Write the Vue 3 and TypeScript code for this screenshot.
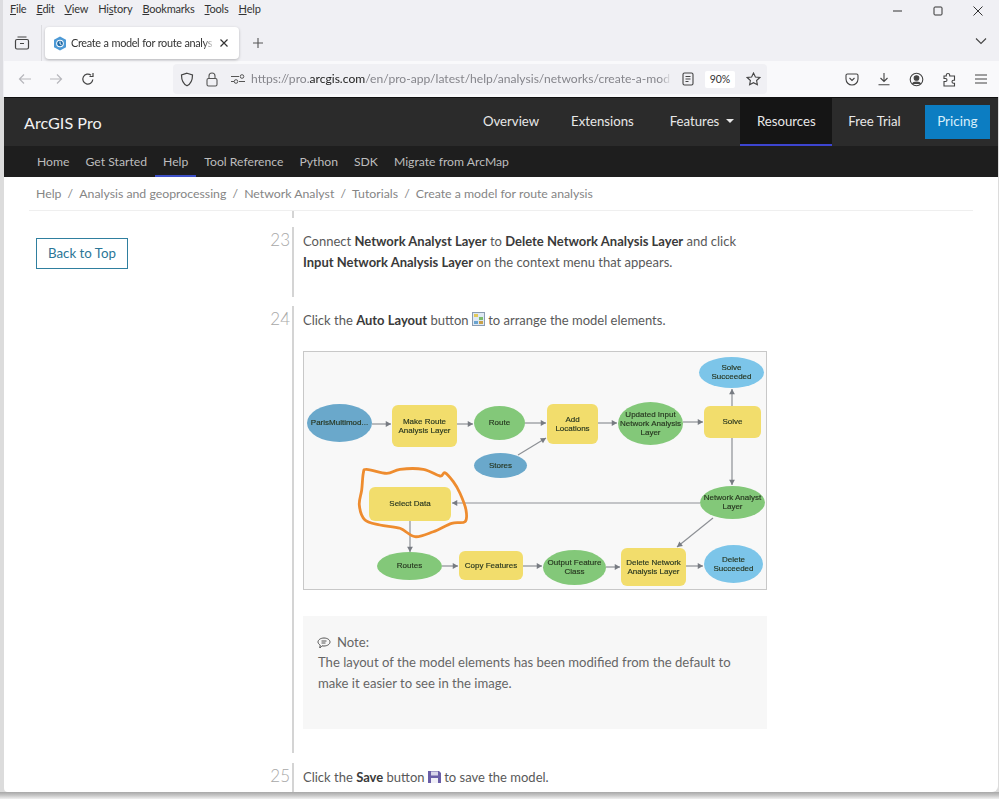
<script setup lang="ts">
const menus = [
  { u: 'F', r: 'ile' }, { u: 'E', r: 'dit' }, { u: 'V', r: 'iew' },
  { b: 'Hi', u: 's', r: 'tory' }, { u: 'B', r: 'ookmarks' }, { u: 'T', r: 'ools' }, { u: 'H', r: 'elp' },
]
const mainNav = ['Overview', 'Extensions']
const subNav = ['Home', 'Get Started', 'Help', 'Tool Reference', 'Python', 'SDK', 'Migrate from ArcMap']
const crumbs = ['Help', 'Analysis and geoprocessing', 'Network Analyst', 'Tutorials', 'Create a model for route analysis']

type Node = { x: number; y: number; w: number; h: number; kind: string; lines: string[] }
const nodes: Node[] = [
  { x: 2, y: 52, w: 65, h: 38, kind: 'blue', lines: ['ParisMultimod...'] },
  { x: 87, y: 53, w: 65, h: 42, kind: 'yellow', lines: ['Make Route', 'Analysis Layer'] },
  { x: 169, y: 54, w: 51, h: 34, kind: 'green', lines: ['Route'] },
  { x: 242, y: 52, w: 51, h: 40, kind: 'yellow', lines: ['Add', 'Locations'] },
  { x: 313, y: 50, w: 65, h: 43, kind: 'green', lines: ['Updated  Input', 'Network Analysis', 'Layer'] },
  { x: 399, y: 54, w: 57, h: 32, kind: 'yellow', lines: ['Solve'] },
  { x: 394, y: 5, w: 65, h: 31, kind: 'sky', lines: ['Solve', 'Succeeded'] },
  { x: 169, y: 101, w: 53, h: 25, kind: 'blue', lines: ['Stores'] },
  { x: 64, y: 135, w: 82, h: 34, kind: 'yellow', lines: ['Select Data'] },
  { x: 395, y: 134, w: 65, h: 33, kind: 'green', lines: ['Network Analyst', 'Layer'] },
  { x: 72, y: 200, w: 65, h: 28, kind: 'green', lines: ['Routes'] },
  { x: 154, y: 199, w: 64, h: 29, kind: 'yellow', lines: ['Copy Features'] },
  { x: 238, y: 198, w: 63, h: 35, kind: 'green', lines: ['Output Feature', 'Class'] },
  { x: 316, y: 196, w: 65, h: 38, kind: 'yellow', lines: ['Delete Network', 'Analysis Layer'] },
  { x: 399, y: 193, w: 59, h: 38, kind: 'sky', lines: ['Delete', 'Succeeded'] },
]
const edges = [
  [67, 72, 86, 72], [152, 72, 168, 72], [220, 71, 241, 71], [293, 71, 312, 71], [378, 70, 398, 70],
  [427, 54, 427, 37], [427, 86, 427, 133], [395, 151, 147, 151], [105, 169, 105, 200],
  [137, 214, 153, 214], [218, 214, 237, 214], [301, 215, 315, 215], [381, 214, 398, 214],
  [213, 103, 241, 86], [408, 166, 372, 195],
]
function textY(n: Node, i: number) {
  return n.y + n.h / 2 + (i - (n.lines.length - 1) / 2) * 9 + 2
}
function arrow(e: number[]) {
  const [x1, y1, x2, y2] = e
  const a = Math.atan2(y2 - y1, x2 - x1)
  const l = 6
  const p1 = `${x2 - l * Math.cos(a - 0.5)},${y2 - l * Math.sin(a - 0.5)}`
  const p2 = `${x2 - l * Math.cos(a + 0.5)},${y2 - l * Math.sin(a + 0.5)}`
  return `${x2},${y2} ${p1} ${p2}`
}
const scribblePts = [
  [58.3, 121.3], [61.7, 117.3], [81.7, 121.3], [95, 117.3], [118.3, 117.3], [135, 124], [140, 120.7],
  [148.3, 129.7], [155, 141.3], [161, 158], [160, 169.7], [146.7, 171.3], [128.3, 179.7], [110, 184.7],
  [95, 176.3], [75, 173], [60, 168], [54.3, 153], [56.7, 138],
]
function smooth(p: number[][]) {
  const n = p.length
  let d = `M${p[0][0]} ${p[0][1]}`
  for (let i = 0; i < n; i++) {
    const p0 = p[(i - 1 + n) % n], p1 = p[i], p2 = p[(i + 1) % n], p3 = p[(i + 2) % n]
    const c1x = p1[0] + (p2[0] - p0[0]) / 6, c1y = p1[1] + (p2[1] - p0[1]) / 6
    const c2x = p2[0] - (p3[0] - p1[0]) / 6, c2y = p2[1] - (p3[1] - p1[1]) / 6
    d += `C${c1x.toFixed(1)} ${c1y.toFixed(1)} ${c2x.toFixed(1)} ${c2y.toFixed(1)} ${p2[0]} ${p2[1]}`
  }
  return d
}
const scribble = smooth(scribblePts)
</script>

<template>
  <div class="window">
    <div class="chrome">
      <div class="menubar">
        <span v-for="m in menus" :key="m.r" class="menu">{{ m.b }}<u>{{ m.u }}</u>{{ m.r }}</span>
        <div class="winctl">
          <svg width="12" height="12" viewBox="0 0 12 12"><path d="M1 6h9" stroke="#333" fill="none" /></svg>
          <svg width="12" height="12" viewBox="0 0 12 12"><rect x="2" y="2" width="8" height="8" rx="1" stroke="#333" fill="none" /></svg>
          <svg width="12" height="12" viewBox="0 0 12 12"><path d="M1.500 1.500l9 9M10.500 1.500l-9 9" stroke="#333" fill="none" /></svg>
        </div>
      </div>
      <div class="tabbar">
        <svg class="tabgroup" width="16" height="16" viewBox="0 0 16 16" fill="none" stroke="#444" stroke-width="1.200">
          <rect x="1.500" y="4.500" width="13" height="9.500" rx="1.500" /><path d="M3.500 2h9M6 8.500h4" />
        </svg>
        <span class="tabsep"></span>
        <div class="tab">
          <svg width="14" height="15" viewBox="0 0 14 15">
            <path d="M7 .5l6 3.300v7.400l-6 3.300-6-3.300V3.800z" fill="#4d9ad6" />
            <circle cx="7" cy="7.500" r="3.800" fill="#fff" /><circle cx="7" cy="7.500" r="2.800" fill="#1f6aa6" /><path d="M7 5.500v2.300l1.500.9" stroke="#fff" fill="none" />
          </svg>
          <span class="tabtitle">Create a model for route analys</span>
          <svg width="10" height="10" viewBox="0 0 10 10"><path d="M1.500 1.500l7 7M8.500 1.500l-7 7" stroke="#333" stroke-width="1.200" fill="none" /></svg>
        </div>
        <svg class="plus" width="12" height="12" viewBox="0 0 12 12"><path d="M6 1v10M1 6h10" stroke="#555" stroke-width="1.100" fill="none" /></svg>
        <svg class="chev" width="14" height="8" viewBox="0 0 14 8"><path d="M2 1.500l5 5 5-5" stroke="#444" stroke-width="1.100" fill="none" /></svg>
      </div>
      <div class="toolbar">
        <svg width="14" height="12" viewBox="0 0 14 12"><path d="M13 6H1.500M6 1.500L1.500 6 6 10.500" stroke="#b7b7bc" stroke-width="1.200" fill="none" /></svg>
        <svg class="fwd" width="14" height="12" viewBox="0 0 14 12"><path d="M1 6h11.500M8 1.500L12.500 6 8 10.500" stroke="#b7b7bc" stroke-width="1.200" fill="none" /></svg>
        <svg class="reload" width="14" height="14" viewBox="0 0 14 14"><path d="M11.800 7.500A5 5 0 1 1 10 3.200M12 1v3.500H8.500" stroke="#444" stroke-width="1.200" fill="none" /></svg>
        <div class="urlbar">
          <svg width="14" height="15" viewBox="0 0 14 15"><path d="M7 1.200l5.500 1.800c0 5-1.500 8.800-5.500 10.800C3 11.800 1.500 8 1.500 3z" stroke="#444" stroke-width="1.200" fill="none" /></svg>
          <svg class="lock" width="12" height="15" viewBox="0 0 12 15"><rect x="1" y="6.500" width="10" height="7.500" rx="1.500" stroke="#555" stroke-width="1.100" fill="none" /><path d="M3 6.500V4a3 3 0 0 1 6 0v2.500" stroke="#555" stroke-width="1.100" fill="none" /></svg>
          <svg class="perm" width="14" height="10" viewBox="0 0 14 10"><path d="M0 2.500h8M0 7.500h3M8 7.500h6" stroke="#555" fill="none" /><circle cx="11" cy="2.500" r="1.800" stroke="#555" fill="none" /><circle cx="5" cy="7.500" r="1.800" stroke="#555" fill="none" /></svg>
          <span class="url">https://pro.<b>arcgis.com</b>/en/pro-app/latest/help/analysis/networks/create-a-mod</span>
          <svg class="reader" width="12" height="14" viewBox="0 0 12 14"><rect x="1" y="1" width="10" height="12" rx="1.500" stroke="#444" stroke-width="1.100" fill="none" /><path d="M3.500 4.500h5M3.500 7h5M3.500 9.500h3" stroke="#444" fill="none" /></svg>
          <span class="zoom">90%</span>
          <svg class="star" width="15" height="14" viewBox="0 0 15 14"><path d="M7.500 1l1.900 4 4.400.500-3.200 3 .8 4.300-3.900-2.100-3.900 2.100.8-4.300-3.200-3 4.400-.5z" stroke="#444" stroke-width="1.100" fill="none" /></svg>
        </div>
        <div class="tools">
          <svg width="14" height="13" viewBox="0 0 14 13" fill="none" stroke="#444" stroke-width="1.100"><path d="M1 2.500C1 1.600 1.600 1 2.500 1h9c.9 0 1.500.6 1.500 1.500V6A6 6 0 0 1 1 6z" /><path d="M4.500 5L7 7.500 9.500 5" /></svg>
          <svg width="14" height="14" viewBox="0 0 14 14" fill="none" stroke="#444" stroke-width="1.100"><path d="M7 1v8.500M3.500 6L7 9.500 10.500 6M1.500 12.800h11" /></svg>
          <svg width="15" height="15" viewBox="0 0 15 15" fill="none" stroke="#444" stroke-width="1.100"><circle cx="7.500" cy="7.500" r="6.300" /><circle cx="7.500" cy="6" r="2.300" fill="#444" /><path d="M3.500 12c1-2.500 7-2.500 8 0" fill="#444" /></svg>
          <svg width="14" height="15" viewBox="0 0 14 15" fill="none" stroke="#444" stroke-width="1.100"><path d="M6 1.500c1 0 1.700.6 1.700 1.500v1h4.800v4.300h-1c-1 0-1.500.7-1.500 1.500s.5 1.500 1.500 1.500h1V14H2V9.500h1.500C4.500 9.500 5 9 5 8s-.5-1.500-1.500-1.500H2V4h2.300V3c0-.9.700-1.500 1.700-1.500z" /></svg>
          <svg width="14" height="12" viewBox="0 0 14 12"><path d="M1 2h12M1 6h12M1 10h12" stroke="#444" stroke-width="1.100" fill="none" /></svg>
        </div>
      </div>
    </div>

    <div class="page">
      <header class="mainbar">
        <span class="brand">ArcGIS Pro</span>
        <nav class="mainnav">
          <a v-for="n in mainNav" :key="n">{{ n }}</a>
          <a class="feat">Features <i class="caret"></i></a>
          <a class="res">Resources</a>
          <a>Free Trial</a>
          <a class="pricing">Pricing</a>
        </nav>
      </header>
      <nav class="subbar">
        <a v-for="s in subNav" :key="s" :class="{ on: s === 'Help' }">{{ s }}</a>
      </nav>
      <div class="crumbs">
        <template v-for="(c, i) in crumbs" :key="c">
          <span v-if="i" class="slash">/</span><span>{{ c }}</span>
        </template>
      </div>
      <div class="body">
        <aside class="side"><a class="top">Back to Top</a></aside>
        <main class="steps">
          <div class="tick"></div>
          <section class="step s23">
            <span class="num">23</span>
            <div class="content">
              <p>Connect <b>Network Analyst Layer</b> to <b>Delete Network Analysis Layer</b> and click<br /><b>Input Network Analysis Layer</b> on the context menu that appears.</p>
            </div>
          </section>
          <section class="step s24">
            <span class="num">24</span>
            <div class="content">
              <p>Click the <b>Auto Layout</b> button
                <svg class="inl" width="13" height="14" viewBox="0 0 13 14"><rect x=".5" y=".5" width="12" height="13" fill="#dfe9f4" stroke="#8a9bb0" /><rect x="2" y="2" width="4" height="3" fill="#e2c95c" /><rect x="7" y="5" width="4" height="3" fill="#7dbb6a" /><rect x="2" y="9" width="4" height="3" fill="#6aa3d0" /><rect x="7" y="9" width="4" height="3" fill="#c9a24a" /></svg>
                to arrange the model elements.</p>
              <div class="diagram">
                <svg width="461" height="237" viewBox="0 0 461 237">
                  <g v-for="(e, i) in edges" :key="i">
                    <line :x1="e[0]" :y1="e[1]" :x2="e[2]" :y2="e[3]" stroke="#8d9095" stroke-width="1.200" />
                    <polygon :points="arrow(e)" fill="#777b82" />
                  </g>
                  <g v-for="n in nodes" :key="n.lines.join()">
                    <ellipse v-if="n.kind !== 'yellow'" :cx="n.x + n.w / 2" :cy="n.y + n.h / 2" :rx="n.w / 2" :ry="n.h / 2" :class="n.kind" />
                    <rect v-else :x="n.x" :y="n.y" :width="n.w" :height="n.h" rx="6" class="yellow" />
                    <text v-for="(l, i) in n.lines" :key="i" :x="n.x + n.w / 2" :y="textY(n, i)" text-anchor="middle" class="lbl">{{ l }}</text>
                  </g>
                  <path class="scribble" :d="scribble" />
                </svg>
              </div>
              <div class="note">
                <div class="notehead">
                  <svg width="14" height="12" viewBox="0 0 14 12"><path d="M7 1c3.300 0 6 1.800 6 4s-2.700 4-6 4c-.7 0-1.300 0-2-.2L2.800 11l.4-2.900C2 7.300 1 6.200 1 5c0-2.200 2.700-4 6-4z" stroke="#555" fill="none" /><path d="M4.500 4h5M4.500 6h4" stroke="#555" fill="none" /></svg>
                  <span>Note:</span>
                </div>
                <div class="notebody">The layout of the model elements has been modified from the default to<br />make it easier to see in the image.</div>
              </div>
            </div>
          </section>
          <section class="step s25">
            <span class="num">25</span>
            <div class="content">
              <p>Click the <b>Save</b> button
                <svg class="inl" width="13" height="13" viewBox="0 0 13 13"><path d="M0 1h11l2 2v10H0z" fill="#6a5ea8" /><rect x="3" y="1.500" width="7" height="4" fill="#d8d5ea" /><rect x="3" y="8" width="7" height="5" fill="#f0eff7" /></svg>
                to save the model.</p>
            </div>
          </section>
        </main>
      </div>
    </div>
    <div class="shadow"></div>
  </div>
</template>

<style>
html, body { margin: 0; padding: 0; background: #fff; overflow: hidden; }
</style>

<style scoped>
.window {
  width: 999px;
  height: 799px;
  overflow: hidden;
  display: flex;
  flex-direction: column;
  background: #dcdcdc;
  font-family: "Lato", "Liberation Sans", sans-serif;
  box-sizing: border-box;
  padding-left: 4px;
}
.chrome { margin-left: -4px; padding-left: 4px; background: linear-gradient(to right, #dcdce0 3px, #f0f0f4 3px); flex: none; }
.menubar { height: 22px; box-sizing: border-box; padding: 0 0 5px 6px; display: flex; align-items: center; gap: 10px; font: 11px/16px "Lato", "Liberation Sans", sans-serif; letter-spacing: -.2px; color: #333; position: relative; }
.menu u { text-underline-offset: 1px; }
.winctl { margin-left: auto; display: flex; gap: 28px; padding-right: 15px; padding-top: 4px; }
.tabbar { height: 39px; display: flex; align-items: center; position: relative; }
.tabgroup { margin-left: 10px; margin-top: 3px; }
.tabsep { width: 1px; height: 36px; background: #dcdce0; margin-left: 11px; margin-top: 2px; }
.tab { width: 194px; height: 32px; margin-left: 3px; margin-top: 3px; background: #fff; border-radius: 4px; box-shadow: 0 1px 3px rgba(0, 0, 0, .25); display: flex; align-items: center; box-sizing: border-box; padding: 0 10px 0 8px; gap: 4px; flex: none; }
.tabtitle { flex: 1; min-width: 0; font: 10.900px/16px "Lato", "Liberation Sans", sans-serif; letter-spacing: -.35px; word-spacing: .5px; color: #333; white-space: nowrap; overflow: hidden; -webkit-mask-image: linear-gradient(to right, #000 92%, transparent); mask-image: linear-gradient(to right, #000 92%, transparent); }
.plus { margin-left: 13px; margin-top: 2px; }
.chev { margin-left: auto; margin-right: 11px; margin-top: -2px; }
.toolbar { height: 36px; padding-left: 14px; background: #f9f9fb; display: flex; align-items: center; }
.toolbar > svg { flex: none; }
.fwd { margin-left: 17px; }
.reload { margin-left: 18px; }
.urlbar { width: 594px; height: 30px; margin-left: 78px; background: #f0f0f4; border-radius: 4px; display: flex; align-items: center; padding-left: 7px; box-sizing: border-box; flex: none; }
.urlbar > svg { flex: none; }
.lock { margin-left: 12px; }
.perm { margin-left: 13px; }
.url { width: 421px; flex: none; margin-left: 6px; font: 12.100px/16px "Lato", "Liberation Sans", sans-serif; color: #85858b; white-space: nowrap; overflow: hidden; -webkit-mask-image: linear-gradient(to right, #000 97%, transparent); mask-image: linear-gradient(to right, #000 97%, transparent); }
.url b { font-weight: 400; color: #222; }
.reader { margin-left: 10px; }
.zoom { width: 30px; height: 17px; margin-left: 11px; background: #fff; font: 10.500px/17px "Lato", "Liberation Sans", sans-serif; color: #333; text-align: center; border-radius: 2px; flex: none; }
.star { margin-left: 11px; }
.tools { display: flex; align-items: center; gap: 18px; margin-left: 78px; flex: none; }
.page { flex: 1; min-height: 0; margin-right: 1px; overflow: hidden; border-radius: 0 0 6px 4px; background: #fff; display: flex; flex-direction: column; color: #595959; position: relative; }
.mainbar { height: 48px; background: #2b2b2b; border-top: 1px solid #111; display: flex; align-items: center; padding-left: 20px; flex: none; }
.brand { font-size: 16.200px; color: #f2f2f2; font-weight: 400; }
.mainnav { margin-left: auto; display: flex; align-items: stretch; height: 48px; font-size: 13.200px; color: #e8e8e8; padding-right: 8px; }
.mainnav a { display: flex; align-items: center; padding: 0 16px 2px; white-space: nowrap; }
.mainnav .feat { padding: 0 6px 2px 20px; gap: 7px; }
.caret { display: inline-block; width: 0; height: 0; border-left: 4px solid transparent; border-right: 4px solid transparent; border-top: 4px solid #e8e8e8; }
.mainnav .res { width: 92px; justify-content: center; padding: 0; background: #151515; border-bottom: 2px solid #3d45d0; box-sizing: border-box; }
.mainnav .pricing { height: 34px; align-self: flex-start; margin-top: 7px; margin-left: 8px; background: #0c7dc2; color: #d8eefa; padding: 0 12.500px 3px; box-sizing: border-box; font-size: 13.500px; }
.subbar { height: 31px; background: #1e1e1e; display: flex; align-items: stretch; padding-left: 33px; font-size: 12.200px; color: #bdbdbd; gap: 16px; flex: none; }
.subbar a { display: flex; align-items: center; box-sizing: border-box; white-space: nowrap; position: relative; }
.subbar .on::after { content: ""; position: absolute; left: -8px; right: -8px; bottom: 0; height: 2px; background: #3d50c8; }
.crumbs { height: 34px; margin: 0 25px; padding-left: 7px; display: flex; align-items: center; gap: 5.600px; font-size: 12.300px; color: #858585; border-bottom: 1px solid #efefef; flex: none; box-sizing: border-box; }
.slash { margin: 0 .5px; }
.body { display: flex; flex: 1; min-height: 0; }
.side { width: 246px; flex: none; padding: 27px 0 0 32px; box-sizing: border-box; }
.top { display: block; width: 92px; height: 31px; border: 1px solid #2f7f9f; box-sizing: border-box; color: #2b7697; font-size: 13.300px; line-height: 29px; text-align: center; }
.steps { flex: 1; min-width: 0; }
.tick { width: 44px; height: 7px; margin-bottom: 9px; border-right: 2px solid #d4d4d4; box-sizing: border-box; }
.step { display: flex; position: relative; }
.num { width: 44px; flex: none; box-sizing: border-box; text-align: right; padding: 3px 2px 0 0; font-size: 17px; font-weight: 300; line-height: 20px; color: #a8a8a8; border-right: 2px solid #d4d4d4; }
.s23 { height: 70px; }
.s24 { height: 447px; margin-top: 9px; }
.s25 { margin-top: 10px; height: 29px; }
.content { padding: 4px 0 0 9px; width: 464px; font-size: 13px; line-height: 21px; color: #595959; }
.content p { margin: 0; }
.content b { color: #3a3a3a; font-weight: 700; }
.inl { vertical-align: -1px; }
.diagram { margin-top: 20px; width: 464px; height: 239px; box-sizing: border-box; border: 1px solid #c8c8c8; background: #f8f8f8; }
.diagram svg { display: block; margin-left: 1px; filter: blur(.25px); }
.blue { fill: #6aa8cb; }
.green { fill: #83c879; }
.yellow { fill: #f2dd6c; }
.sky { fill: #7cc5e9; }
.lbl { font: 8px "Liberation Sans", sans-serif; fill: #26351f; stroke: #26351f; stroke-width: .15; }
.scribble { fill: none; stroke: #ee8c2f; stroke-width: 2.800; }
.note { margin-top: 26px; width: 464px; height: 113px; box-sizing: border-box; background: #f7f7f7; padding: 16px 14px 0; font-size: 13.100px; color: #666; }
.notehead { display: flex; align-items: center; gap: 6px; color: #666; }
.notebody { margin-top: -1px; padding-left: 1px; }
.shadow { flex: none; height: 7px; margin-left: -4px; background: linear-gradient(#a8a8a8, #c4c4c4 45%, #f0f0f0); }
</style>
